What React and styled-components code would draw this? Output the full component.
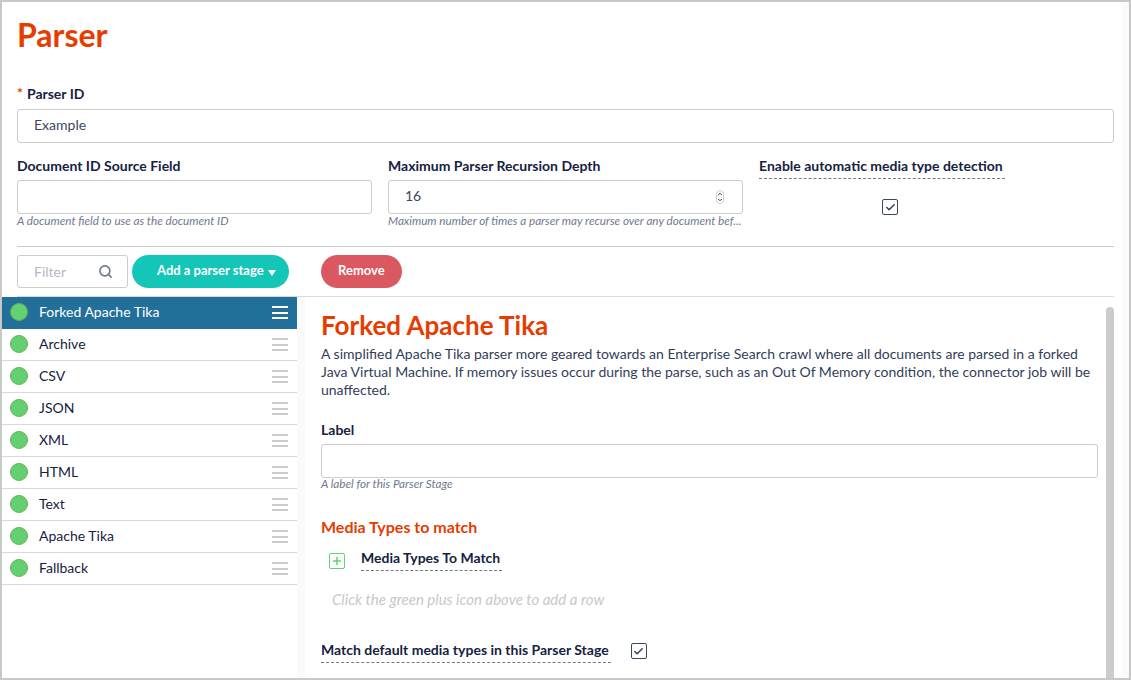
import styled, { createGlobalStyle } from 'styled-components';
import { Search, Plus, Check, ChevronUp, ChevronDown } from 'lucide-react';

const GlobalStyle = createGlobalStyle`
  html, body {
    margin: 0;
    padding: 0;
    background: #fff;
    overflow: hidden;
  }
  * {
    box-sizing: border-box;
  }
`;

const Page = styled.div`
  width: 1131px;
  height: 680px;
  display: flex;
  border: 2px solid #c8c8c8;
  font-family: Lato, "Liberation Sans", sans-serif;
  color: #152242;
  overflow: hidden;
  background: #fff;
`;

const Form = styled.div`
  padding: 0 8px 0 15px;
  width: 1120px;
  flex: none;
`;

const EdgeStrip = styled.div`
  flex: 1;
  background: #fafafa;
`;

const Title = styled.h1`
  margin: 0;
  padding-top: 14px;
  height: 81px;
  font-size: 32px;
  line-height: 38px;
  font-weight: 700;
  color: #e73c00;
`;

const Label = styled.div`
  font-size: 14px;
  line-height: 20px;
  font-weight: 700;
  color: #152242;
  white-space: nowrap;
`;

const StageLabel = styled(Label)`
  margin-top: 21px;
`;

const Required = styled.span`
  color: #e73c00;
  font-size: 14px;
  font-weight: 700;
  margin-right: 4px;
  vertical-align: 1px;
`;

const TextBox = styled.div`
  height: 34px;
  margin-top: ${(p) => p.$gap ?? 5}px;
  padding: 0 16px 3px;
  display: flex;
  align-items: center;
  justify-content: space-between;
  border: 1px solid #ccc;
  border-radius: 3px;
  background: #fff;
  font-size: 14px;
  color: #3d4660;
`;

const FieldRow = styled.div`
  display: grid;
  grid-template-columns: 355px 355px 355px;
  column-gap: 16px;
  margin-top: 13px;
`;

const Hint = styled.div`
  margin: ${(p) => p.$shift ?? -1}px 0 1px;
  font-size: 11.7px;
  line-height: 14px;
  font-style: italic;
  color: #6f7890;
  white-space: nowrap;
`;

const Tip = styled.span`
  display: inline-block;
  padding: 0 2px 2px 0;
  border-bottom: 1px dashed #6f7890;
`;

const CheckCell = styled.div`
  display: flex;
  justify-content: center;
  width: 262px;
  margin-top: 20px;
`;

const CheckBox = styled.span`
  width: 16px;
  height: 16px;
  flex: none;
  margin-top: ${(p) => p.$top || 0}px;
  display: inline-flex;
  align-items: center;
  justify-content: center;
  border: 1px solid #3d4660;
  border-radius: 2px;
  color: #3d4660;
`;

const Spinner = styled.span`
  width: 8px;
  height: 14px;
  margin: 3px 2px 0 0;
  display: flex;
  flex-direction: column;
  align-items: center;
  justify-content: center;
  border: 1px solid #ccc;
  border-radius: 4px;
  color: #333;
`;

const Toolbar = styled.div`
  display: flex;
  align-items: flex-start;
  height: 51px;
  margin-top: 18px;
  padding-top: 8px;
  border-top: 1px solid #ccc;
  border-bottom: 1px solid #d3dbe6;
`;

const FilterBox = styled.div`
  width: 111px;
  height: 33px;
  display: flex;
  align-items: center;
  justify-content: space-between;
  padding: 0 14px 1px 16px;
  border: 1px solid #ccc;
  border-radius: 3px;
  font-size: 14px;
  color: #b4b9c4;
  svg {
    color: #6f7890;
  }
`;

const PillButton = styled.button`
  height: 33px;
  padding: 0 ${(p) => p.$right}px 3px ${(p) => p.$leftPad}px;
  margin-left: ${(p) => p.$left}px;
  border: 0;
  border-radius: 17px;
  background: ${(p) => p.$color};
  color: #fff;
  font-family: inherit;
  font-size: 13px;
  font-weight: 700;
  display: flex;
  align-items: center;
  white-space: nowrap;
`;

const Caret = styled.span`
  width: 0;
  height: 0;
  margin: 6px 0 0 4px;
  border-left: 4.5px solid transparent;
  border-right: 4.5px solid transparent;
  border-top: 6px solid #fff;
`;

const Body = styled.div`
  display: flex;
  height: 381px;
  margin-left: -15px;
`;

const Sidebar = styled.div`
  width: 295px;
  flex: none;
`;

const StageRow = styled.div`
  height: 32px;
  display: flex;
  align-items: center;
  padding: 0 9px 2px 8px;
  border-bottom: 1px solid ${(p) => (p.$active ? '#22709a' : '#d9d9d9')};
  background: ${(p) => (p.$active ? '#22709a' : '#fff')};
  color: ${(p) => (p.$active ? '#fff' : '#152242')};
  font-size: 14px;
`;

const StatusDot = styled.span`
  width: 18px;
  height: 18px;
  flex: none;
  border-radius: 50%;
  border: 1px solid #6cae54;
  background: #62d173;
`;

const StageName = styled.span`
  flex: 1;
  margin-left: 11px;
`;

const DragBars = styled.span`
  width: 16px;
  height: 13px;
  margin-top: 2px;
  display: flex;
  flex-direction: column;
  justify-content: space-between;
  span {
    display: block;
    height: 2px;
    background: ${(p) => (p.$active ? '#fff' : '#cccccc')};
  }
`;

const Strip = styled.div`
  width: 8px;
  flex: none;
  background: #fafafa;
`;

const Detail = styled.div`
  flex: none;
  width: 801px;
  padding: 14px 8px 0 16px;
`;

const StageTitle = styled.h2`
  margin: 0;
  font-size: 26px;
  line-height: 28px;
  font-weight: 700;
  color: #e73c00;
`;

const Description = styled.p`
  margin: 6px 0 0;
  font-size: 14px;
  line-height: 18px;
  color: #333d5a;
`;

const SubHeading = styled.div`
  margin-top: 27px;
  font-size: 16px;
  line-height: 20px;
  font-weight: 700;
  color: #e73c00;
`;

const MatchHeader = styled.div`
  display: flex;
  align-items: center;
  margin: 11px 0 0 8px;
`;

const AddBox = styled.span`
  width: 16px;
  height: 16px;
  margin: 2px 16px 0 0;
  display: inline-flex;
  align-items: center;
  justify-content: center;
  border: 1px solid #62d173;
  border-radius: 2px;
  color: #62d173;
`;

const EmptyNote = styled.div`
  margin: 18px 0 0 11px;
  font-size: 15px;
  line-height: 20px;
  font-style: italic;
  color: #c8c8c8;
`;

const InlineCheck = styled.div`
  display: flex;
  align-items: flex-start;
  margin-top: 31px;
  gap: 20px;
`;

const ScrollThumb = styled.div`
  width: 8px;
  flex: none;
  margin-top: 10px;
  background: #ccc;
  border-radius: 4px 4px 0 0;
`;

const stages = ['Forked Apache Tika', 'Archive', 'CSV', 'JSON', 'XML', 'HTML', 'Text', 'Apache Tika', 'Fallback'];

export default function App() {
  return (
    <Page>
      <GlobalStyle />
      <Form>
        <Title>Parser</Title>
        <Label><Required>*</Required>Parser ID</Label>
        <TextBox>Example</TextBox>
        <FieldRow>
          <div>
            <Label>Document ID Source Field</Label>
            <TextBox $gap={4} />
            <Hint>A document field to use as the document ID</Hint>
          </div>
          <div>
            <Label>Maximum Parser Recursion Depth</Label>
            <TextBox $gap={4}>
              16
              <Spinner>
                <ChevronUp size={6} strokeWidth={4} />
                <ChevronDown size={6} strokeWidth={4} />
              </Spinner>
            </TextBox>
            <Hint>Maximum number of times a parser may recurse over any document bef...</Hint>
          </div>
          <div>
            <Label><Tip>Enable automatic media type detection</Tip></Label>
            <CheckCell>
              <CheckBox><Check size={11} strokeWidth={3.5} /></CheckBox>
            </CheckCell>
          </div>
        </FieldRow>
        <Toolbar>
          <FilterBox>
            Filter
            <Search size={15} strokeWidth={2.6} />
          </FilterBox>
          <PillButton $color="#14c6b8" $leftPad={25} $right={13} $left={4}>
            Add a parser stage
            <Caret />
          </PillButton>
          <PillButton $color="#dc5860" $leftPad={17.5} $right={17.5} $left={32}>Remove</PillButton>
        </Toolbar>
        <Body>
          <Sidebar>
            {stages.map((name, i) => (
              <StageRow key={name} $active={i === 0}>
                <StatusDot />
                <StageName>{name}</StageName>
                <DragBars $active={i === 0}><span /><span /><span /></DragBars>
              </StageRow>
            ))}
          </Sidebar>
          <Strip />
          <Detail>
            <StageTitle>Forked Apache Tika</StageTitle>
            <Description>
              A simplified Apache Tika parser more geared towards an Enterprise Search crawl where all documents are parsed in a forked Java Virtual Machine. If memory issues occur during the parse, such as an Out Of Memory condition, the connector job will be unaffected.
            </Description>
            <StageLabel>Label</StageLabel>
            <TextBox $gap={4} />
            <Hint $shift={-2}>A label for this Parser Stage</Hint>
            <SubHeading>Media Types to match</SubHeading>
            <MatchHeader>
              <AddBox><Plus size={12} strokeWidth={3} /></AddBox>
              <Label><Tip>Media Types To Match</Tip></Label>
            </MatchHeader>
            <EmptyNote>Click the green plus icon above to add a row</EmptyNote>
            <InlineCheck>
              <Label><Tip>Match default media types in this Parser Stage</Tip></Label>
              <CheckBox $top={3}><Check size={11} strokeWidth={3.5} /></CheckBox>
            </InlineCheck>
          </Detail>
          <ScrollThumb />
        </Body>
      </Form>
      <EdgeStrip />
    </Page>
  );
}
